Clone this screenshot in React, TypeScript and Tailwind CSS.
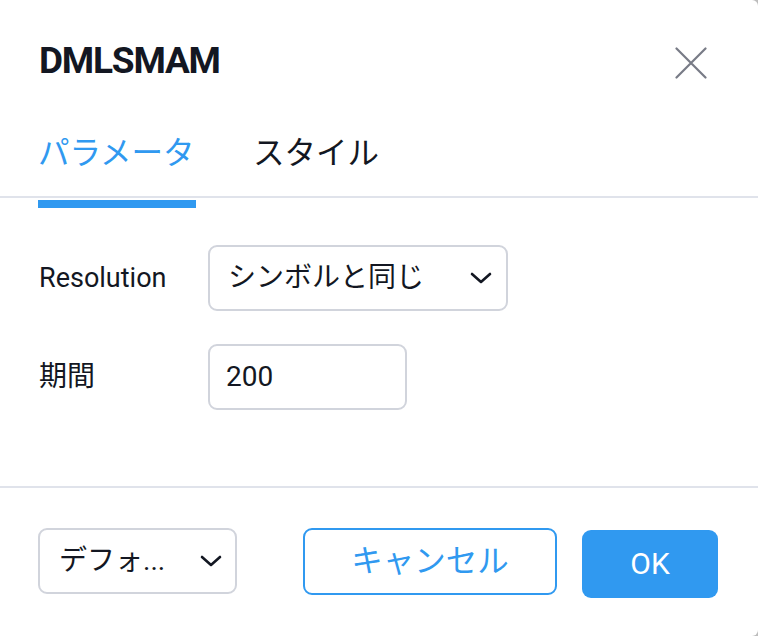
import React from 'react';

const BLUE = '#3099f0';

function Chevron() {
  return (
    <svg width="22" height="12" viewBox="0 0 22 12" fill="none" className="shrink-0">
      <path d="M2 2 L11 10 L20 2" stroke="#131722" strokeWidth="2.6" strokeLinecap="round" strokeLinejoin="round" />
    </svg>
  );
}

function CloseIcon() {
  return (
    <svg width="32" height="32" viewBox="0 0 32 32" fill="none">
      <path d="M1.5 1.5 L30.5 30.5 M30.5 1.5 L1.5 30.5" stroke="#787b86" strokeWidth="2.2" strokeLinecap="round" />
    </svg>
  );
}

export default function App() {
  return (
    <div className="w-[758px] h-[636px] bg-[#bdbdbd]">
      <div
        className="w-[758px] h-[636px] bg-white rounded-tr-[6px] rounded-br-[6px] flex flex-col text-[#131722]"
        style={{ fontFamily: 'Roboto, "Noto Sans CJK JP", sans-serif' }}
      >
        {/* Header */}
        <div className="mt-[30px] h-[60px] flex items-center justify-between pl-[39px] pr-[51px]">
          <h1 className="text-[37px] font-bold leading-none tracking-[-1.2px]">DMLSMAM</h1>
          <button className="mt-[5px]">
            <CloseIcon />
          </button>
        </div>

        {/* Tabs */}
        <div className="mt-[22px] h-[86px] border-b-2 border-[#e0e3eb] flex items-center pl-[38px] gap-[57px]">
          <div className="w-[158px] text-[31.5px] leading-none" style={{ color: BLUE }}>
            パラメータ
          </div>
          <div className="text-[31.5px] leading-none">スタイル</div>
        </div>
        <div className="mt-[2px] ml-[38px] w-[158px] h-[8px]" style={{ backgroundColor: BLUE }} />

        {/* Form */}
        <div className="mt-[37px] flex items-center">
          <div className="w-[208px] pl-[39px] text-[27px] leading-none">Resolution</div>
          <div className="w-[300px] h-[66px] border-2 border-[#d1d4dc] rounded-[9px] flex items-center justify-between pl-[18px] pr-[14px]">
            <span className="text-[28px] leading-none">シンボルと同じ</span>
            <Chevron />
          </div>
        </div>
        <div className="mt-[33px] flex items-center">
          <div className="w-[208px] pl-[39px] text-[28px] leading-none">期間</div>
          <div className="w-[199px] h-[66px] border-2 border-[#d1d4dc] rounded-[9px] flex items-center pl-[16px]">
            <span className="text-[28px] leading-none">200</span>
          </div>
        </div>

        <div className="mt-[76px] h-[2px] bg-[#e0e3eb]" />

        {/* Footer */}
        <div className="mt-[40px] flex items-start pl-[38px]">
          <div className="w-[199px] h-[66px] border-2 border-[#d1d4dc] rounded-[9px] flex items-center justify-between pl-[19px] pr-[13px]">
            <span className="text-[28px] leading-none">デフォ...</span>
            <Chevron />
          </div>
          <button
            className="ml-[66px] w-[254px] h-[67px] border-2 rounded-[9px] flex items-center justify-center text-[31.5px] leading-none bg-white"
            style={{ borderColor: BLUE, color: BLUE }}
          >
            キャンセル
          </button>
          <button
            className="ml-[25px] mt-[2px] w-[136px] h-[68px] rounded-[9px] flex items-center justify-center text-[30px] leading-none text-white"
            style={{ backgroundColor: BLUE }}
          >
            OK
          </button>
        </div>
      </div>
    </div>
  );
}
